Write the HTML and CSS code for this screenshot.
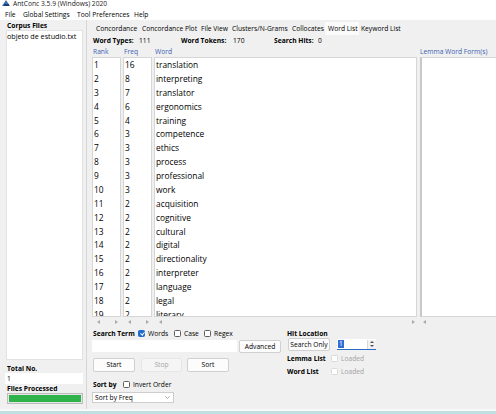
FILE: index.html
```html
<!DOCTYPE html>
<html>
<head>
<meta charset="utf-8">
<link rel="stylesheet" href="styles.css">
</head>
<body>
<div class="app">
  <div class="titlebar">
    <svg class="appicon" width="9" height="7" viewBox="0 0 9 7"><path d="M0 6 L4 0 L8 6 Z" fill="#3d6fb0"/><rect x="2" y="4" width="5" height="2" fill="#1f3f73"/></svg>
    <span>AntConc 3.5.9 (Windows) 2020</span>
  </div>
  <div class="menubar">
    <span class="m1">File</span><span class="m2">Global Settings</span><span class="m3">Tool Preferences</span><span class="m4">Help</span>
  </div>
  <div class="main">
    <div class="left">
      <div class="lbl l-corpus">Corpus Files</div>
      <div class="corpus"><div class="cfile">objeto de estudio.txt</div></div>
      <div class="lbl l-total">Total No.</div>
      <div class="field">1</div>
      <div class="lbl l-proc">Files Processed</div>
      <div class="progress"><div class="fill"></div></div>
    </div>
    <div class="divider"></div>
    <div class="right">
      <div class="tabs">
        <div class="tab t1">Concordance</div>
        <div class="tab t2">Concordance Plot</div>
        <div class="tab t3">File View</div>
        <div class="tab t4">Clusters/N-Grams</div>
        <div class="tab t5">Collocates</div>
        <div class="tab t6 sel">Word List</div>
        <div class="tab t7">Keyword List</div>
      </div>
      <div class="stats">
        <span class="b s1">Word Types:</span><span class="s2">111</span><span class="b s3">Word Tokens:</span><span class="s4">170</span><span class="b s5">Search Hits:</span><span>0</span>
      </div>
      <div class="lists">
        <div class="col rank">
          <div class="hdr">Rank</div>
          <div class="box">
            <div>1</div><div>2</div><div>3</div><div>4</div><div>5</div><div>6</div><div>7</div><div>8</div><div>9</div><div>10</div><div>11</div><div>12</div><div>13</div><div>14</div><div>15</div><div>16</div><div>17</div><div>18</div><div>19</div>
          </div>
          <div class="hs"><i class="al"></i><i class="ar"></i></div>
        </div>
        <div class="col freq">
          <div class="hdr">Freq</div>
          <div class="box">
            <div>16</div><div>8</div><div>7</div><div>6</div><div>4</div><div>3</div><div>3</div><div>3</div><div>3</div><div>3</div><div>2</div><div>2</div><div>2</div><div>2</div><div>2</div><div>2</div><div>2</div><div>2</div><div>2</div>
          </div>
          <div class="hs"><i class="al"></i><i class="ar"></i></div>
        </div>
        <div class="col word">
          <div class="hdr">Word</div>
          <div class="box">
            <div>translation</div><div>interpreting</div><div>translator</div><div>ergonomics</div><div>training</div><div>competence</div><div>ethics</div><div>process</div><div>professional</div><div>work</div><div>acquisition</div><div>cognitive</div><div>cultural</div><div>digital</div><div>directionality</div><div>interpreter</div><div>language</div><div>legal</div><div>literary</div>
          </div>
          <div class="hs"><i class="al"></i><i class="ar"></i></div>
        </div>
        <div class="col lemma">
          <div class="hdr">Lemma Word Form(s)</div>
          <div class="box"></div>
          <div class="hs"><i class="al"></i></div>
        </div>
      </div>
      <div class="controls">
        <div class="cleft">
          <div class="row r-term">
            <span class="b w-term">Search Term</span>
            <span class="chk w-words"><i class="cb on"></i>Words</span>
            <span class="chk w-case"><i class="cb"></i>Case</span>
            <span class="chk"><i class="cb"></i>Regex</span>
          </div>
          <div class="row r-input">
            <div class="input"></div>
            <div class="btn adv">Advanced</div>
          </div>
          <div class="row r-btns">
            <div class="btn start">Start</div>
            <div class="btn stop dis">Stop</div>
            <div class="btn sort">Sort</div>
          </div>
          <div class="row r-sort">
            <span class="b w-sortby">Sort by</span>
            <span class="chk"><i class="cb"></i>Invert Order</span>
          </div>
          <div class="select">
            <span>Sort by Freq</span>
            <svg width="5" height="3" viewBox="0 0 5 3"><polyline points="0.3,0.3 2.5,2.5 4.7,0.3" fill="none" stroke="#8a8a8a" stroke-width="0.7"/></svg>
          </div>
        </div>
        <div class="cright">
          <div class="row r-hit"><span class="b">Hit Location</span></div>
          <div class="row r-hitctl">
            <div class="btn sonly">Search Only</div>
            <div class="spin">
              <span class="spinval">1</span>
              <span class="spinbtns"><i class="up"></i><i class="dn"></i></span>
            </div>
          </div>
          <div class="row r-lemma">
            <span class="b w-ll">Lemma List</span>
            <span class="chk dis"><i class="cb"></i>Loaded</span>
          </div>
          <div class="row r-wl">
            <span class="b w-ll">Word List</span>
            <span class="chk dis"><i class="cb"></i>Loaded</span>
          </div>
        </div>
      </div>
    </div>
  </div>
  <div class="bottom"><div class="bline"></div><div class="teal"></div></div>
</div>
</body>
</html>
```
FILE: styles.css
```css
html, body {
  margin: 0;
  padding: 0;
}
body {
  font-family: "Open Sans", "Noto Sans", sans-serif;
  font-size: 6.7px;
  color: #000;
  background: #f0f0f0;
}
.app {
  width: 496px;
  height: 414px;
  overflow: hidden;
  display: flex;
  flex-direction: column;
  background: #f0f0f0;
}
.b { font-weight: bold; }

/* title & menu */
.titlebar {
  height: 10px;
  background: #fff;
  display: flex;
  align-items: flex-start;
  line-height: 7px;
  color: #222;
}
.appicon { margin: 0 2px 0 2px; }
.menubar {
  height: 10px;
  background: #fff;
  line-height: 10px;
  display: flex;
}
.menubar span { display: block; }
.m1 { margin-left: 5px; width: 18px; }
.m2 { width: 54px; }
.m3 { width: 57px; }

/* main */
.main {
  height: 389px;
  display: flex;
}
.left {
  width: 86px;
  flex-shrink: 0;
  box-sizing: border-box;
  padding-left: 6px;
  display: flex;
  flex-direction: column;
}
.lbl {
  height: 8px;
  line-height: 8px;
  font-weight: bold;
  padding-left: 1px;
}
.l-corpus { margin-top: 2px; }
.corpus {
  width: 77px;
  height: 330px;
  box-sizing: border-box;
  background: #fff;
  border: 1px solid #e2e2e2;
}
.cfile {
  font-size: 7.2px;
  line-height: 10px;
}
.l-total { margin-top: 5px; }
.field {
  margin-left: -1px;
  width: 78px;
  height: 11px;
  line-height: 11px;
  background: #fff;
  padding-left: 2px;
  box-sizing: border-box;
}
.l-proc { margin-top: 1px; }
.progress {
  margin-left: 1px;
  width: 76px;
  height: 11px;
  box-sizing: border-box;
  border: 1px solid #bcbcbc;
  background: #e6e6e6;
  padding: 1px;
}
.fill {
  height: 100%;
  background: #2db34a;
}
.divider {
  width: 2px;
  flex-shrink: 0;
  box-sizing: border-box;
  border-left: 1px solid #d6d6d6;
}
.right {
  width: 408px;
  flex-shrink: 0;
  overflow: hidden;
  display: flex;
  flex-direction: column;
}

/* tabs */
.tabs {
  height: 15px;
  display: flex;
  align-items: flex-end;
  padding-left: 6px;
}
.tab {
  flex-shrink: 0;
  height: 12px;
  line-height: 12px;
  padding-left: 2px;
  box-sizing: border-box;
  white-space: nowrap;
}
.t1 { width: 46px; }
.t2 { width: 59px; }
.t3 { width: 31px; }
.t4 { width: 60px; }
.t5 { width: 35px; }
.t6 { width: 34px; padding-left: 3px; }
.t7 { width: 42px; }
.tab.sel {
  background: #fbfbfb;
  height: 13px;
  line-height: 13px;
}

/* stats */
.stats {
  margin-top: 1px;
  height: 10px;
  line-height: 10px;
  padding-left: 5px;
  display: flex;
  white-space: nowrap;
}
.stats span { display: block; flex-shrink: 0; }
.s1 { width: 46px; }
.s2 { width: 42px; }
.s3 { width: 52px; }
.s4 { width: 41px; }
.s5 { width: 44px; }

/* lists */
.lists {
  display: flex;
  padding-left: 4px;
}
.col { display: flex; flex-direction: column; flex-shrink: 0; }
.rank { width: 29px; margin-right: 2px; }
.freq { width: 29px; margin-right: 2px; }
.word { width: 263px; margin-right: 3px; }
.lemma { width: 90px; }
.hdr {
  height: 11px;
  line-height: 11px;
  color: #3c60b0;
  padding-left: 1px;
  white-space: nowrap;
}
.lemma .hdr { padding-left: 0; }
.box {
  height: 260px;
  box-sizing: border-box;
  background: #fff;
  border: 1px solid #d6d6d6;
  overflow: hidden;
  font-size: 8.4px;
  line-height: 13.875px;
  padding-left: 1px;
  white-space: nowrap;
}
.lemma .box { border-left: 2px solid #c8c8c8; }
.hs {
  height: 10px;
  display: flex;
  justify-content: space-between;
  align-items: center;
  padding: 0 3px 0 5px;
}
.hs i {
  display: block;
  width: 0;
  height: 0;
  border-top: 2.5px solid transparent;
  border-bottom: 2.5px solid transparent;
}
.al { border-right: 3px solid #a9a9a9; }
.ar { border-left: 3px solid #a9a9a9; }
.word .hs { padding-right: 2px; }
.lemma .hs { padding-left: 3px; }

/* controls */
.controls {
  display: flex;
  padding-left: 4px;
}
.cleft {
  width: 195px;
  flex-shrink: 0;
  display: flex;
  flex-direction: column;
}
.cright {
  display: flex;
  flex-direction: column;
}
.row {
  display: flex;
  align-items: center;
  white-space: nowrap;
}
.row > * { flex-shrink: 0; }
.chk {
  display: flex;
  align-items: center;
}
.cb {
  display: block;
  width: 7px;
  height: 7px;
  box-sizing: border-box;
  border: 1px solid #5e5e5e;
  border-radius: 1.5px;
  background: #fff;
  margin-right: 3px;
  position: relative;
}
.cb.on {
  background: #1e6bcc;
  border-color: #1e6bcc;
}
.cb.on::after {
  content: "";
  position: absolute;
  left: 1.6px;
  top: 0.1px;
  width: 1.6px;
  height: 3.2px;
  border-right: 0.8px solid #fff;
  border-bottom: 0.8px solid #fff;
  transform: rotate(40deg);
}
.chk.dis { color: #a3a3a3; }
.chk.dis .cb { border-color: #d9d9d9; }

.r-term { margin-top: 1px; height: 10px; padding-left: 1px; }
.w-term { width: 45px; }
.w-words { width: 36px; }
.w-case { width: 30px; }
.r-input { margin-top: 2px; height: 13px; align-items: flex-start; }
.input {
  width: 145px;
  height: 12px;
  background: #fff;
  margin-right: 2px;
}
.btn {
  box-sizing: border-box;
  height: 13px;
  line-height: 11px;
  text-align: center;
  background: #fcfcfc;
  border: 1px solid #d0d0d0;
  border-radius: 2px;
}
.adv { width: 42px; }
.r-btns { margin-top: 5px; height: 14px; padding-left: 1px; }
.r-btns .btn { height: 14px; line-height: 12px; }
.start { width: 42px; margin-right: 6px; }
.stop { width: 41px; margin-right: 5px; }
.sort { width: 42px; }
.btn.dis {
  background: #f5f5f5;
  border-color: #e6e6e6;
  color: #a6a6a6;
}
.r-sort { margin-top: 7px; height: 10px; padding-left: 1px; }
.w-sortby { width: 30px; }
.select {
  margin-top: 3px;
  width: 82px;
  height: 11px;
  box-sizing: border-box;
  background: #fff;
  border: 1px solid #cdcdcd;
  display: flex;
  align-items: center;
  justify-content: space-between;
  padding: 0 3px 0 2px;
}

.r-hit { margin-top: 1px; height: 10px; }
.r-hitctl { height: 13px; align-items: flex-start; }
.sonly { width: 42px; margin-left: 1px; margin-right: 7px; }
.spin {
  margin-top: 1px;
  width: 39px;
  height: 11px;
  box-sizing: border-box;
  background: #fff;
  border-bottom: 1.5px solid #2a6cc6;
  display: flex;
  align-items: center;
  justify-content: space-between;
  padding-left: 1px;
}
.spinval {
  background: #2f6fd3;
  color: #fff;
  line-height: 8px;
  padding: 0 1px;
}
.spinbtns {
  width: 8px;
  height: 9px;
  display: flex;
  flex-direction: column;
  justify-content: space-around;
  align-items: center;
  background: #f2f2f2;
  border-left: 1px solid #dadada;
}
.spinbtns i {
  display: block;
  width: 0;
  height: 0;
  border-left: 2px solid transparent;
  border-right: 2px solid transparent;
}
.up { border-bottom: 2px solid #555; }
.dn { border-top: 2px solid #555; }
.r-lemma { margin-top: 2px; height: 10px; }
.r-wl { margin-top: 3px; height: 10px; }
.w-ll { width: 44px; }

/* bottom */
.bottom { height: 5px; flex-shrink: 0; }
.bline { height: 2px; background: #f8f8f8; }
.teal { height: 3px; background: #bfe0e3; }
```
